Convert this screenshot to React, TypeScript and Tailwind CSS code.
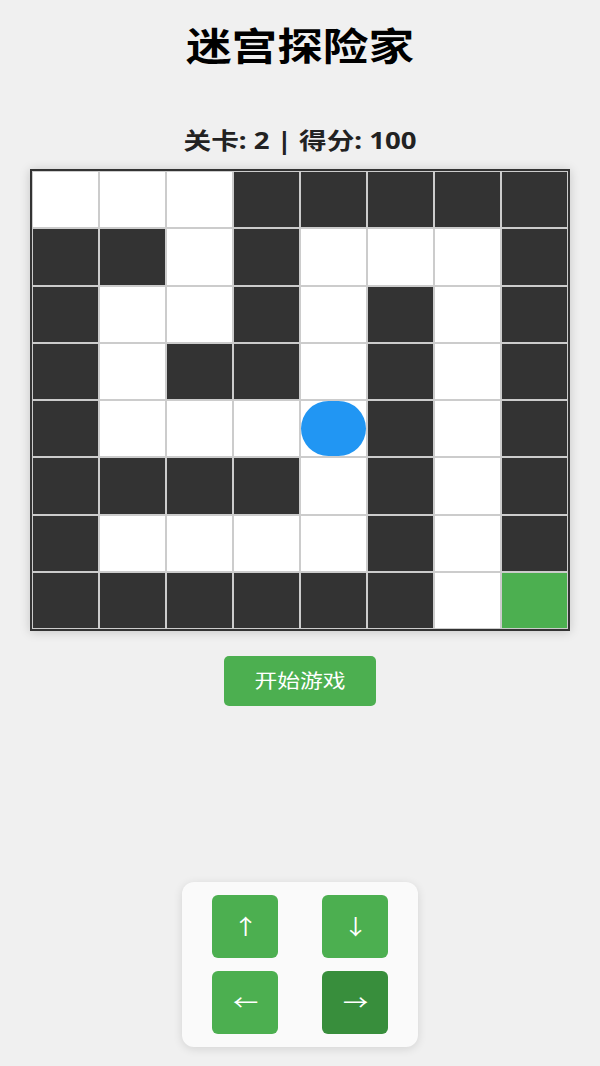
import React from "react";

const MAP = [
  "WWWDDDDD",
  "DDWDWWWD",
  "DWWDWDWD",
  "DWDDWDWD",
  "DWWWPDWD",
  "DDDDWDWD",
  "DWWWWDWD",
  "DDDDDDWG",
];

export default function App() {
  return (
    <div
      className="min-h-[1066px] bg-[#f0f0f0] flex flex-col items-center"
      style={{ fontFamily: '"Noto Sans", "Noto Sans CJK SC", sans-serif' }}
    >
      <h1 className="mt-[20px] text-[38px] leading-[50px] font-bold text-black">
        <span className="inline-block scale-x-120">迷宫探险家</span>
      </h1>
      <div className="mt-[55px] text-[23px] leading-[30px] font-bold text-[#222]">
        <span className="inline-block scale-x-120">关卡: 2 | 得分: 100</span>
      </div>
      <div className="mt-[14px] w-[540px] border-2 border-[#333] grid grid-cols-8 shadow-[0_1px_10px_rgba(0,0,0,0.18)]">
        {MAP.flatMap((row, r) =>
          row.split("").map((c, i) => (
            <div
              key={`${r}-${i}`}
              className={`h-[57.25px] border border-[#ccc] flex items-center justify-center ${
                c === "D" ? "bg-[#333]" : c === "G" ? "bg-[#4CAF50]" : "bg-white"
              }`}
            >
              {c === "P" && <div className="w-full h-full rounded-full bg-[#2196F3]" />}
            </div>
          ))
        )}
      </div>
      <button className="mt-[25px] w-[152px] h-[50px] rounded-[5px] bg-[#4CAF50] text-white text-[19px]">
        <span className="inline-block scale-x-120">开始游戏</span>
      </button>
      <div className="mt-auto mb-[19px] w-[236px] bg-[#fafafa] rounded-[12px] shadow-[0_2px_10px_rgba(0,0,0,0.12)] px-[30px] py-[13px] grid grid-cols-2 gap-x-[44px] gap-y-[13px]">
        <button className="h-[63px] rounded-[6px] bg-[#4CAF50] text-white text-[21px]">
          <span className="inline-block scale-x-120">↑</span>
        </button>
        <button className="h-[63px] rounded-[6px] bg-[#4CAF50] text-white text-[21px]">
          <span className="inline-block scale-x-120">↓</span>
        </button>
        <button className="h-[63px] rounded-[6px] bg-[#4CAF50] text-white text-[21px]">
          <span className="inline-block scale-x-120">←</span>
        </button>
        <button className="h-[63px] rounded-[6px] bg-[#388E3C] text-white text-[21px]">
          <span className="inline-block scale-x-120">→</span>
        </button>
      </div>
    </div>
  );
}
